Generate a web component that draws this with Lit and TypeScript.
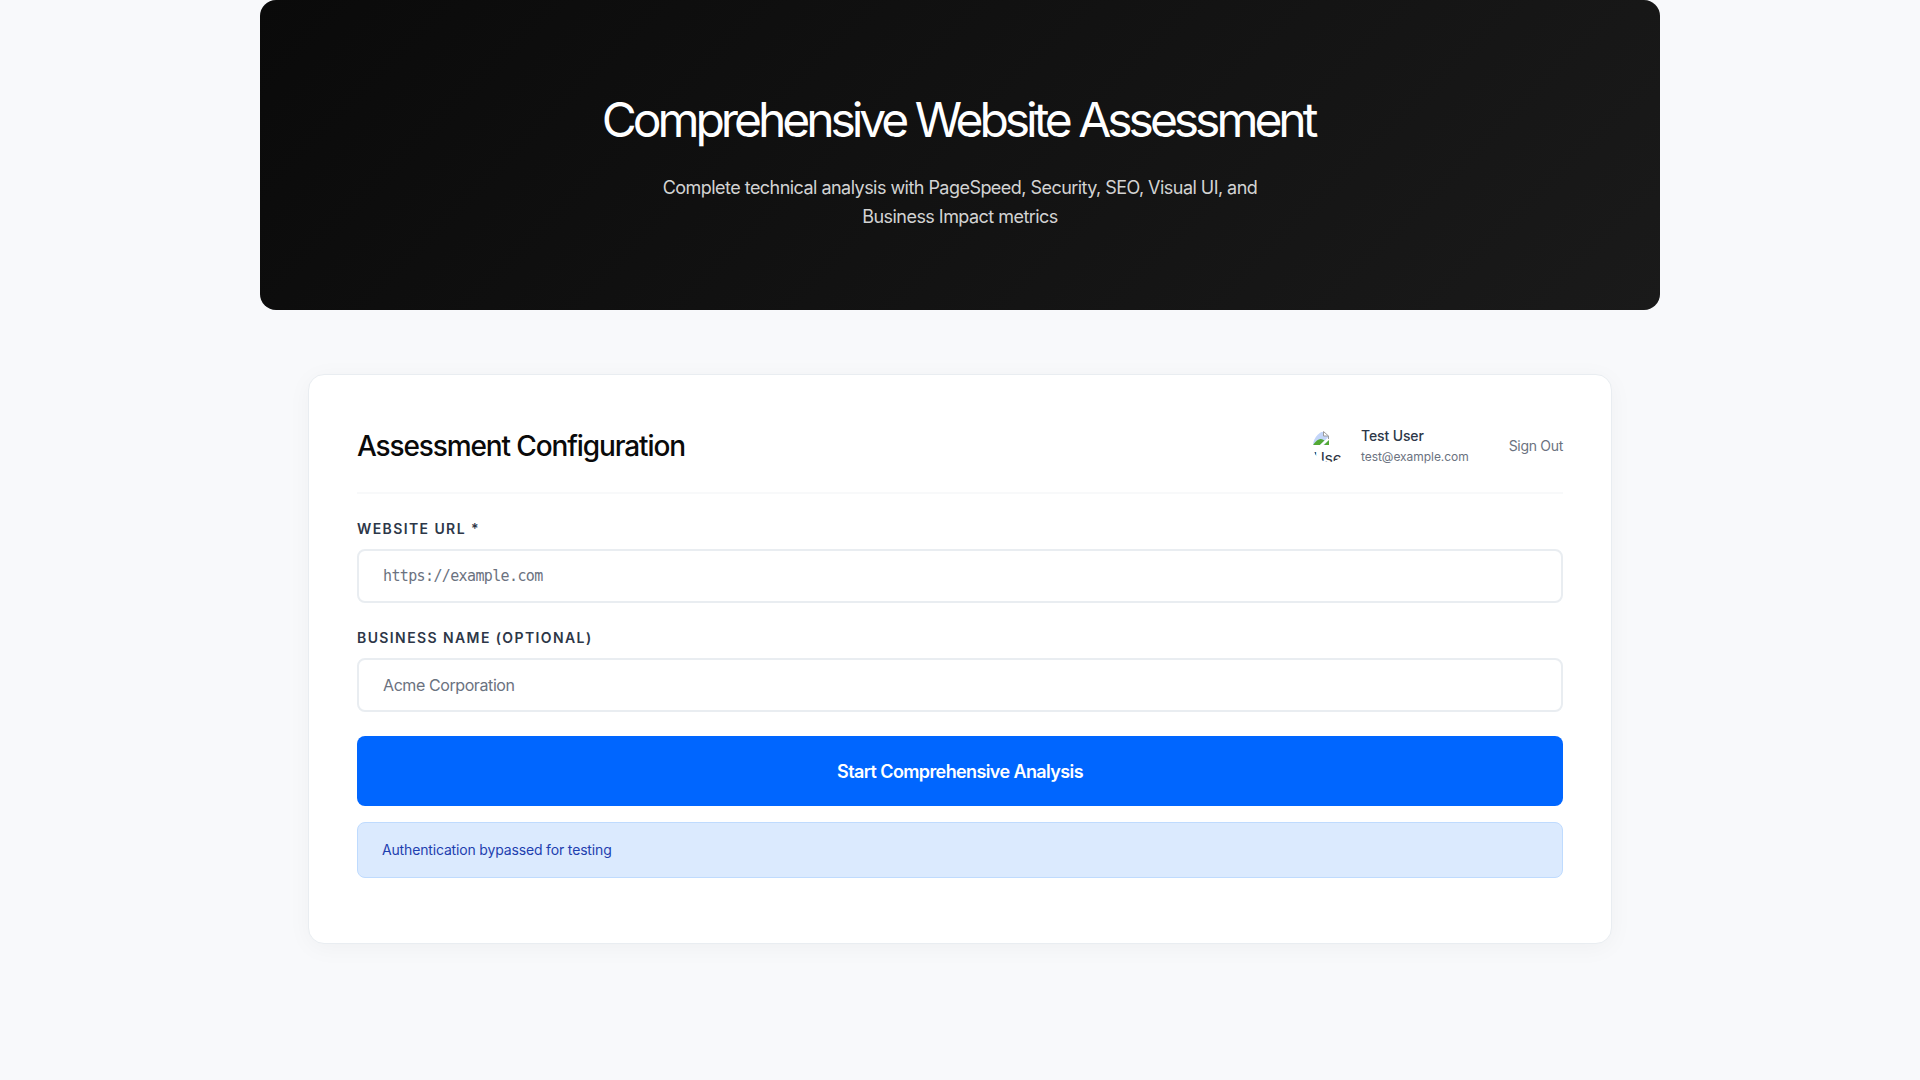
import { LitElement, html, css } from "lit";
import { customElement } from "lit/decorators.js";

@customElement("app-root")
export class AppRoot extends LitElement {
  static styles = css`
    :host {
      display: block;
      min-height: 1080px;
      background: #f8f9fb;
      font-family: Inter, "Liberation Sans", sans-serif;
      font-size: 16px;
      line-height: 1.6;
      color: #2d3748;
      overflow: hidden;
      box-sizing: border-box;
    }
    *, *::before { box-sizing: border-box; }
    .container { width: 1400px; margin: 0 auto; }
    .hero {
      height: 310.4px;
      padding: 82px 48px 0;
      border-radius: 16px;
      background: linear-gradient(135deg, #0a0a0a 0%, #1a1a1a 100%);
      text-align: center;
      margin-bottom: 64px;
    }
    .title {
      margin: 0 0 16px;
      font-size: 48px;
      font-weight: 400;
      line-height: 76.4px;
      letter-spacing: -4.05px;
      text-indent: -4px;
      color: #fff;
    }
    .lead {
      margin: 0 auto;
      width: 600px;
      font-size: 18px;
      letter-spacing: -0.54px;
      line-height: 28.8px;
      color: rgba(255, 255, 255, 0.83);
    }
    .card {
      margin: 0 48px;
      padding: 48px;
      height: 569.2px;
      background: #fff;
      border: 1px solid #e9edf1;
      border-radius: 16px;
      box-shadow: 0 4px 24px rgba(0, 0, 0, 0.04);
    }
    .head {
      display: flex;
      justify-content: space-between;
      align-items: center;
      height: 70.8px;
      padding-bottom: 24px;
      margin-bottom: 24px;
      border-bottom: 2px solid #f8f9fa;
    }
    .heading { margin: 0; padding-top: 2px; font-size: 28px; font-weight: 500; letter-spacing: -1.12px; color: #0a0a0a; }
    .user { display: flex; align-items: center; gap: 16px; }
    .avatar { width: 32px; height: 32px; border-radius: 50%; overflow: hidden; font-size: 16px; line-height: 25.6px; }
    .avatar svg { display: block; margin: 0; }
    .alt { display: block; letter-spacing: -0.3px; white-space: nowrap; }
    .name { padding-top: 1px; font-size: 14px; font-weight: 500; line-height: 22.4px; letter-spacing: -0.12px; }
    .mail { font-size: 12px; line-height: 20.6px; letter-spacing: -0.05px; color: #6b7280; }
    .signout { font: inherit; font-size: 14px; letter-spacing: -0.3px; color: #6b7280; background: none; border: 0; padding: 0; margin-left: 24px; }
    .field { display: block; margin-bottom: 24px; }
    .label {
      display: block;
      margin-bottom: 8px;
      font-size: 14px;
      font-weight: 600;
      line-height: 22.4px;
      letter-spacing: 0.1em;
      text-transform: uppercase;
    }
    .input {
      display: block;
      width: 100%;
      height: 54.6px;
      padding: 1px 24px 0;
      border: 2px solid #e9edf1;
      border-radius: 8px;
      font: 16px Inter, sans-serif;
      letter-spacing: -0.41px;
      outline: none;
      background: #fff;
    }
    .input::placeholder { color: #6b7280; opacity: 1; }
    .mono { padding-top: 0; font: 15px "DejaVu Sans Mono", monospace; letter-spacing: -0.63px; }
    .submit {
      display: block;
      width: 100%;
      height: 69.6px;
      padding: 2px 0 0;
      border: 0;
      border-radius: 8px;
      background: #0066ff;
      color: #fff;
      font: 600 18px Inter, sans-serif;
      letter-spacing: -0.61px;
    }
    .notice {
      margin-top: 16px;
      padding: 16px 24px;
      height: 56.4px;
      border: 1px solid #bfdbfe;
      border-radius: 8px;
      background: #dbeafe;
      color: #1e40af;
      font-size: 14px;
      letter-spacing: -0.16px;
    }
  `;

  render() {
    return html`
      <main class="container">
        <header class="hero">
          <h1 class="title">Comprehensive Website Assessment</h1>
          <p class="lead">Complete technical analysis with PageSpeed, Security, SEO, Visual UI, and Business Impact metrics</p>
        </header>
        <section class="card">
          <div class="head">
            <h2 class="heading">Assessment Configuration</h2>
            <div class="user">
              <div class="avatar">
                <svg width="16" height="16" viewBox="0 0 16 16">
                  <path d="M0 2h10l5.500 4v9H0z" fill="#c3d5f9" />
                  <path d="M0 15q6-9 11.500-4.500L7 15z" fill="#53a934" />
                  <path d="M16 6.500L7 15h3l6-5z" fill="#fff" />
                  <path d="M16 10l-5 5h5z" fill="#53a934" />
                  <path d="M10.500 1.500v4.500h5z" fill="#fff" stroke="#9b9b9b" />
                  <path d="M15.500 6v3" stroke="#9b9b9b" />
                </svg>
                <span class="alt">User</span>
              </div>
              <div>
                <div class="name">Test User</div>
                <div class="mail">test@example.com</div>
              </div>
              <button class="signout">Sign Out</button>
            </div>
          </div>
          <label class="field">
            <span class="label">Website URL *</span>
            <input class="input mono" placeholder="https://example.com" />
          </label>
          <label class="field">
            <span class="label">Business Name (Optional)</span>
            <input class="input" placeholder="Acme Corporation" />
          </label>
          <button class="submit">Start Comprehensive Analysis</button>
          <div class="notice">Authentication bypassed for testing</div>
        </section>
      </main>
    `;
  }
}
